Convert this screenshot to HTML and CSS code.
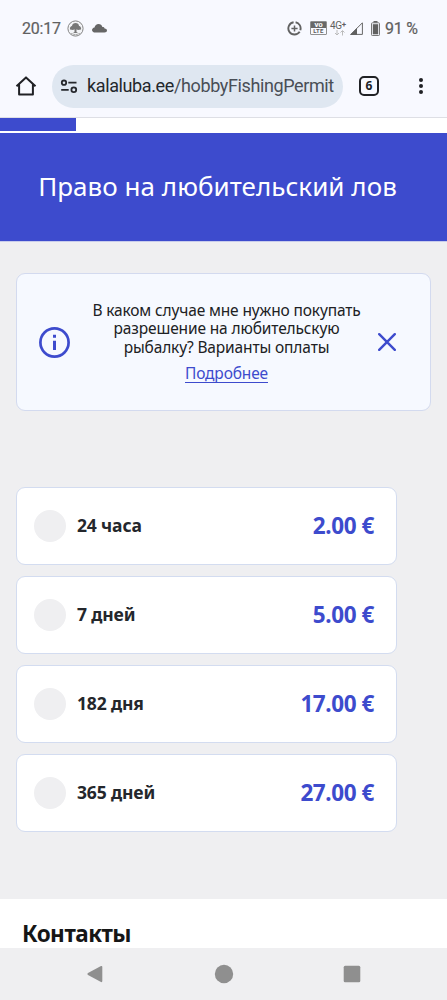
FILE: index.html
```html
<!DOCTYPE html>
<html lang="ru">
<head>
<meta charset="utf-8">
<title>Право на любительский лов</title>
<link rel="stylesheet" href="styles.css">
</head>
<body>
<div class="screen">
  <div class="status">
    <span class="clock">20:17</span>
    <svg class="status-tree" width="17" height="17" viewBox="0 0 17 17"><circle cx="8.5" cy="8.5" r="7.6" fill="#f2f3f6" stroke="#858585" stroke-width="1"/><path d="M3 9.5C2.500 7.500 4 6 5 6C5 4 7 3 8.500 3C10.500 3 12 4 12 6C13.500 6 14.500 8 14 9.500L11 10L9.500 9.300V12L11 13H6L7.500 12V9.300L6 10Z" fill="#777"/><path d="M4 13.500Q8.500 16 13 13.500" fill="none" stroke="#aaa"/></svg>
    <svg class="status-cloud" width="15" height="9" viewBox="0 0 15 9"><path d="M3.300 8.600C1.400 8.600 0 7.500 0 6C0 4.700 1 3.600 2.500 3.400C3.100 1.300 4.500 0 6.500 0C8.500 0 9.900 1.200 10.400 3.100C11.300 2.900 12.300 3.400 12.600 4.500C14 4.500 15 5.300 15 6.600C15 7.800 14 8.600 12.500 8.600Z" fill="#666"/></svg>
    <span class="grow"></span>
    <svg class="status-saver" width="15" height="15" viewBox="0 0 15 15" fill="none" stroke="#626262"><path d="M6.600 1.200A6.200 6.200 0 1 0 12.700 10.800M8.600 1.200A6.200 6.200 0 0 1 13.300 9.200" stroke-width="1.900"/><path d="M7.500 4.400V10.600M4.400 7.500H10.600" stroke-width="1.500"/></svg>
    <span class="volte"><b>VO</b><i>LTE</i></span>
    <span class="network"><span>4G<sup>+</sup></span><svg width="11" height="6" viewBox="0 0 11 6" fill="none" stroke="#bbb"><path d="M3 0V4.500M1 3L3 5L5 3M8.500 5.500V1M6.500 2.500L8.500 .5L10.500 2.500"/></svg></span>
    <svg class="signal" width="13" height="13" viewBox="0 0 13 13"><path d="M.8 12.400L12.400 .8V12.400Z" fill="none" stroke="#666" stroke-width="1"/><path d="M0 13L7 6V13Z" fill="#606060"/></svg>
    <svg class="battery" width="9" height="15" viewBox="0 0 9 15"><path d="M2.500 0H6.500V2H2.500Z" fill="#666"/><rect x=".5" y="1.800" width="8" height="12.700" rx=".8" fill="#f8f9ff" stroke="#777"/><path d="M1.800 3.200H7.200V13.300H1.800Z" fill="#606060"/></svg>
    <span class="percent">91 %</span>
  </div>
  <div class="toolbar">
    <svg class="home" width="22" height="22" viewBox="0 0 22 22" fill="none" stroke="#202125" stroke-width="2"><path d="M1.500 11.200L11 2.400L20.500 11.200M4.100 9.500V19.500H17.900V9.500" stroke-linejoin="round"/></svg>
    <div class="address">
      <svg class="tune" width="18" height="15" viewBox="0 0 18 15" fill="none" stroke="#26282d" stroke-width="1.800"><circle cx="4" cy="3.700" r="2.200"/><path d="M8.300 3.700H16.500M1.200 10.800H8.700"/><circle cx="13.800" cy="10.800" r="2.400"/></svg>
      <span class="url">kalaluba.ee<span>/hobbyFishingPermit</span></span>
    </div>
    <span class="tabs">6</span>
    <span class="dots"><i></i><i></i><i></i></span>
  </div>
  <div class="progress"><div></div></div>
  <header class="hero"><h1>Право на любительский лов</h1></header>
  <main class="content">
    <section class="notice">
      <svg class="info" width="31" height="31" viewBox="0 0 31 31"><circle cx="15.500" cy="15.500" r="14.100" fill="none" stroke="#3d4bcd" stroke-width="2.700"/><path d="M14 7.700H17V10.700H14ZM14 13.700H17V23H14Z" fill="#3d4bcd"/></svg>
      <div class="message">
        <p>В каком случае мне нужно покупать<br>разрешение на любительскую<br>рыбалку? Варианты оплаты</p>
        <a>Подробнее</a>
      </div>
      <svg class="close" width="18" height="18" viewBox="0 0 18 18"><path d="M1.200 1.200L16.800 16.800M16.800 1.200L1.200 16.800" stroke="#3d4bcd" stroke-width="2.400" stroke-linecap="round"/></svg>
    </section>
    <div class="options">
      <div class="option"><i></i><span>24 часа</span><b>2.00 €</b></div>
      <div class="option"><i></i><span>7 дней</span><b>5.00 €</b></div>
      <div class="option"><i></i><span>182 дня</span><b>17.00 €</b></div>
      <div class="option"><i></i><span>365 дней</span><b>27.00 €</b></div>
    </div>
  </main>
  <footer class="contacts"><h2>Контакты</h2></footer>
  <nav class="system-nav">
    <svg width="18" height="20" viewBox="0 0 18 20"><path d="M2 9L15 2Q16.300 1.500 16.300 3V17Q16.300 18.500 15 18L2 11Q.5 10 2 9Z" fill="#8f8f8f"/></svg>
    <svg width="20" height="20" viewBox="0 0 20 20"><circle cx="10" cy="10" r="9.200" fill="#8f8f8f"/></svg>
    <svg width="18" height="18" viewBox="0 0 18 18"><rect x=".7" y=".7" width="16.600" height="16.600" rx="1.500" fill="#8f8f8f"/></svg>
  </nav>
</div>
</body>
</html>
```
FILE: styles.css
```css
* { box-sizing: border-box; }
body { margin: 0; font-family: "Noto Sans", sans-serif; }
svg { display: block; flex: none; }
h1, h2, p { margin: 0; }
.screen { width: 447px; height: 1000px; display: flex; flex-direction: column; overflow: hidden; background: #f8f9ff; }
.status { height: 55px; display: flex; align-items: center; padding: 1px 30px 0 22px; font: 16px Roboto, sans-serif; color: #606060; white-space: nowrap; }
.clock { width: 45px; letter-spacing: -.2px; -webkit-text-stroke: .2px; }
.status-cloud { margin-left: 8px; }
.grow { flex: 1; }
.status-saver { margin-right: 8px; }
.volte { width: 17px; height: 14px; margin-right: 3px; display: flex; flex-direction: column; border: 1px solid #909090; border-radius: 1px; text-align: center; font: bold 6px/6px Roboto, sans-serif; }
.volte b { background: #686868; color: #fff; }
.volte i { font-style: normal; letter-spacing: .3px; }
.network { width: 18px; height: 15px; margin-right: 2px; font: 10px/9px Roboto, sans-serif; letter-spacing: -.3px; }
.network sup { font-size: 8px; line-height: 0; font-weight: bold; vertical-align: 2px; }
.network svg { margin-left: 4px; }
.signal { margin-right: 8px; }
.battery { margin-right: 5px; }
.percent { width: 32px; letter-spacing: -.2px; -webkit-text-stroke: .2px; }
.toolbar { height: 63px; display: flex; align-items: center; padding: 0 24px 0 15px; border-bottom: 1px solid #dedfe5; }
.address { width: 291px; height: 43px; margin-left: 15px; padding: 0 9px 0 8px; border-radius: 22px; display: flex; align-items: center; background: #dfe7f1; }
.url { margin-left: 9px; width: 248px; white-space: nowrap; font: 18px/26px Roboto, sans-serif; letter-spacing: -.38px; color: #24272c; }
.url span { color: #494e56; }
.tabs { width: 20px; height: 20px; margin-left: 16px; border: 2px solid #202125; border-radius: 5px; text-align: center; font: bold 12px/16px "Open Sans", sans-serif; color: #202125; }
.dots { margin-left: auto; width: 4px; display: flex; flex-direction: column; gap: 2.3px; }
.dots i { width: 4px; height: 4px; border-radius: 50%; background: #202125; }
.progress { height: 15px; background: #fff; }
.progress div { width: 76px; height: 13px; background: #3d4bcd; }
.hero { height: 109px; display: flex; align-items: center; justify-content: center; background: #3d4bcd; color: #fff; border-bottom: 1px solid #c8ccec; padding: 0 12px 2px 0; }
.hero h1 { font-size: 26px; line-height: 36px; font-weight: 400; white-space: nowrap; letter-spacing: .04px; }
.content { height: 657px; padding: 31px 16px 0; background: #efeff1; }
.notice { width: 415px; height: 138px; display: flex; align-items: center; padding: 0 34px 0 22px; background: #f6f9ff; border: 1px solid #d3daef; border-radius: 9px; }
.message { flex: 1; padding: 0 0 0 5px; text-align: center; font-size: 15.5px; letter-spacing: -.14px; line-height: 18.3px; color: #202123; white-space: nowrap; }
.message a { display: inline-block; margin-top: 8px; line-height: 18px; color: #3d4bcd; border-bottom: 1px solid #3d4bcd; }
.options { width: 381px; margin-top: 76px; display: grid; gap: 11px; }
.option { height: 78px; display: flex; align-items: center; padding: 0 22px 0 17px; background: #fff; border: 1px solid #d3dcf0; border-radius: 9px; }
.option i { width: 32px; height: 32px; margin-right: 11px; border-radius: 50%; background: #efeff1; }
.option span { padding-bottom: 2px; font-size: 17.5px; letter-spacing: -.15px; font-weight: 700; color: #24272c; }
.option b { margin-left: auto; padding-bottom: 1px; font-size: 22.5px; letter-spacing: -.42px; color: #3d4bcd; }
.contacts { height: 49px; padding: 19px 22px 0; overflow: hidden; background: #fff; }
.contacts h2 { font-size: 22.5px; line-height: 31px; letter-spacing: -.5px; color: #161616; }
.system-nav { height: 52px; display: flex; align-items: center; justify-content: space-between; padding: 0 86px; background: #efeff1; }
```
